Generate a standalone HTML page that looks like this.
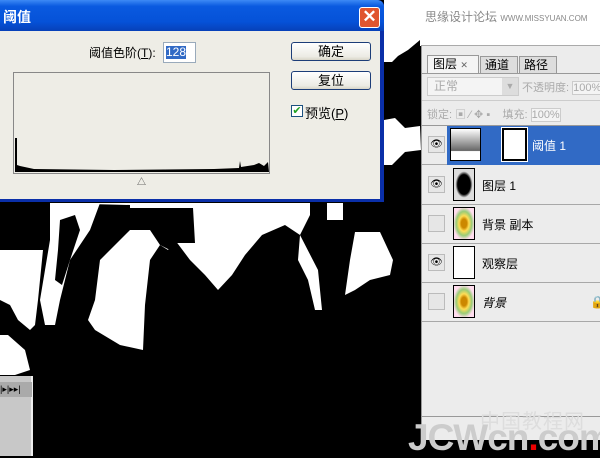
<!DOCTYPE html>
<html><head><meta charset="utf-8"><style>
*{margin:0;padding:0;box-sizing:border-box}
body{width:600px;height:456px;overflow:hidden;background:#000;position:relative;font-family:"Liberation Sans","Noto Sans CJK SC",sans-serif;font-size:12px;color:#000}
.abs{position:absolute;white-space:nowrap}
#dlg{left:0;top:0;width:384px;height:202px;background:#0a2fa8;border-radius:0 6px 0 0}
#title{left:0;top:0;width:384px;height:31px;background:linear-gradient(#3d8af5,#0a5ae0 20%,#0552d8 70%,#0640b8);border-radius:0 7px 0 0}
#body{left:0;top:31px;width:380px;height:168px;background:#eeede6}
.btn{position:absolute;width:80px;height:19px;border:1px solid #1c3d78;border-radius:3px;background:linear-gradient(#fff,#ecebe4 80%,#d8d5c8);text-align:center;line-height:17px;font-size:13px}
#panel{left:421px;top:45px;width:179px;height:395px;background:#ececec;border-left:1px solid #999;border-top:1px solid #aaa}
.row{position:absolute;left:0;width:179px;height:39px;border-bottom:1px solid #a8a8a8}
.eye{position:absolute;left:6px;top:10px;width:17px;height:17px;border:1px solid #bbb;background:#e6e6e6;font-size:10px;text-align:center;line-height:15px}
.thumb{position:absolute;left:31px;top:2px;width:22px;height:33px;border:1px solid #000;background:#fff}
.lname{position:absolute;left:60px;top:11px;font-size:12px}
</style></head><body>
<svg class="abs" style="left:0;top:0" width="600" height="456">
<rect width="600" height="456" fill="#000"/>
<g fill="#fff">
<rect x="420" y="0" width="180" height="46"/>
<polygon points="384,0 420,0 420,40 408,50 398,56 392,62 384,62"/>
<polygon points="384,120 395,118 405,128 420,126 421,150 405,152 392,165 384,165"/>
<polygon points="50,203 310,203 310,215 300,235 285,225 262,235 245,255 232,275 218,290 205,275 190,260 175,240 168,250 160,245 150,260 145,305 143,350 120,345 95,330 88,320 95,300 100,260 115,245 130,230 130,205"/>
<polygon points="50,203 100,203 90,230 70,260 60,300 55,325 45,325 40,300 45,270 50,240"/>
<polygon points="0,250 43,250 38,300 35,325 30,330 18,320 10,305 0,300"/>
<polygon points="0,335 8,335 25,350 30,370 15,375 0,375"/>
<polygon points="327,203 343,203 343,220 327,220"/>
<polygon points="355,232 380,232 393,260 390,275 370,280 355,290 345,295 350,260"/>
<polygon points="300,235 318,270 322,310 315,310 308,280 298,260"/>
</g>
<g fill="#000">
<polygon points="123,208 193,208 195,243 175,243 170,250 160,245 150,230 130,230"/>
<polygon points="60,220 75,215 80,230 70,260 62,285 55,280 58,250"/>
</g>
</svg>
<div id="dlg" class="abs"></div>
<div id="title" class="abs"><span class="abs" style="left:3px;top:7px;color:#fff;font-weight:bold;font-size:14px">阈值</span>
<div class="abs" style="left:359px;top:7px;width:21px;height:21px;border:1px solid #fff;border-radius:3px;background:#e0552f;color:#fff;text-align:center;font-size:17px;line-height:18px;font-weight:bold">✕</div></div>
<div id="body" class="abs"></div>
<div class="abs" style="left:89px;top:44px;font-size:12px">阈值色阶(<u>T</u>):</div>
<div class="abs" style="left:163px;top:42px;width:33px;height:21px;border:1px solid #9ab;background:#fff"><span style="position:absolute;left:2px;top:3px;background:#316ac5;color:#fff;font-size:12px;line-height:13px">128</span></div>
<div class="abs" style="left:13px;top:72px;width:257px;height:102px;border:1px solid #888;background:#eeede6">
<svg width="255" height="100" style="position:absolute;left:0;top:0"><path d="M1,99 L1,65 L3,65 L3,92 L6,93 L20,96 L100,97 L200,96 L225,95 L226,88 L227,94 L240,92 L245,90 L250,93 L254,89 L255,99 Z" fill="#000"/></svg></div>
<div class="abs" style="left:137px;top:175px;font-size:9px;color:#444">△</div>
<div class="btn" style="left:291px;top:42px">确定</div>
<div class="btn" style="left:291px;top:71px">复位</div>
<div class="abs" style="left:291px;top:105px;width:12px;height:12px;border:1px solid #1c5180;background:#fff;color:#21a121;font-size:11px;line-height:10px;text-align:center">✔</div>
<div class="abs" style="left:305px;top:103px;font-size:13px">预览(<u>P</u>)</div>
<div class="abs" style="left:425px;top:8px;color:#888;font-size:12px">思缘设计论坛 <span style="font-size:8px">WWW.MISSYUAN.COM</span></div>
<div id="panel" class="abs">
<div class="abs" style="left:5px;top:9px;width:52px;height:18px;border:1px solid #999;border-bottom:none;background:#f4f4f4;padding-left:5px;font-size:12px;line-height:17px">图层 <span style="font-size:9px;color:#666">✕</span></div>
<div class="abs" style="left:58px;top:10px;width:38px;height:17px;border:1px solid #999;border-bottom:none;background:#ddd;padding-left:4px;line-height:16px">通道</div>
<div class="abs" style="left:97px;top:10px;width:38px;height:17px;border:1px solid #999;border-bottom:none;background:#ddd;padding-left:4px;line-height:16px">路径</div>
<div class="abs" style="left:0;top:27px;width:179px;border-top:1px solid #999"></div>
<div class="abs" style="left:5px;top:31px;width:92px;height:19px;border:1px solid #ccc;background:#f4f4f4;color:#aaa;padding-left:6px;line-height:17px">正常<span style="position:absolute;right:0;top:0;width:16px;height:17px;background:#ddd;text-align:center;font-size:9px">▼</span></div>
<div class="abs" style="left:100px;top:33px;color:#aaa;font-size:11px">不透明度: <span style="border:1px solid #ccc;background:#f4f4f4">100%</span></div>
<div class="abs" style="left:0;top:54px;width:179px;border-top:1px solid #ccc"></div>
<div class="abs" style="left:5px;top:60px;color:#aaa;font-size:11px">锁定: ▣ ⁄ ✥ ▪ &nbsp; &nbsp;填充: <span style="border:1px solid #ccc;background:#f4f4f4">100%</span></div>
<div class="abs" style="left:0;top:79px;width:179px;border-top:1px solid #999"></div>
<div class="row" style="top:80px"><div class="eye">👁</div><div class="abs" style="left:25px;top:0;width:154px;height:39px;background:#316ac5"></div>
<div class="abs" style="left:28px;top:2px;width:31px;height:33px;border:1px solid #000;background:linear-gradient(#fff,#666 70%,#fff 72%)"></div>
<div class="abs" style="left:80px;top:2px;width:25px;height:33px;border:2px solid #000;outline:1px solid #fff;background:#fff"></div>
<div class="lname" style="left:110px;color:#fff">阈值 1</div></div>
<div class="row" style="top:120px"><div class="eye">👁</div><div class="thumb" style="background:radial-gradient(#000 45%,#ddd 60%)"></div><div class="lname">图层 1</div></div>
<div class="row" style="top:159px"><div class="eye"></div><div class="thumb" style="background:radial-gradient(#c80 20%,#fd5 35%,#9c7 55%,#fde 75%)"></div><div class="lname">背景 副本</div></div>
<div class="row" style="top:198px"><div class="eye">👁</div><div class="thumb"></div><div class="lname">观察层</div></div>
<div class="row" style="top:237px"><div class="eye"></div><div class="thumb" style="background:radial-gradient(#c80 20%,#fd5 35%,#9c7 55%,#fde 75%)"></div><div class="lname" style="font-style:italic">背景</div><div class="abs" style="left:168px;top:12px;color:#666">🔒</div></div>
<div class="abs" style="left:0;top:370px;width:179px;border-top:1px solid #999"></div>
</div>
<div class="abs" style="left:0;top:376px;width:33px;height:80px;background:#c8c8c8;border-right:2px solid #eee"></div>
<div class="abs" style="left:0;top:382px;width:32px;height:15px;background:#aaa;font-size:9px;line-height:15px;color:#000">|▸|▸▸|</div>
<div class="abs" style="left:480px;top:405px;color:#ddd;font-size:20px;letter-spacing:1px">中国教程网</div>
<div class="abs" style="left:408px;top:418px;color:#ccc;font-size:37px;font-weight:bold;letter-spacing:-1px;line-height:40px">JCWcn<span style="color:#e00">.</span>com</div>
</body></html>
